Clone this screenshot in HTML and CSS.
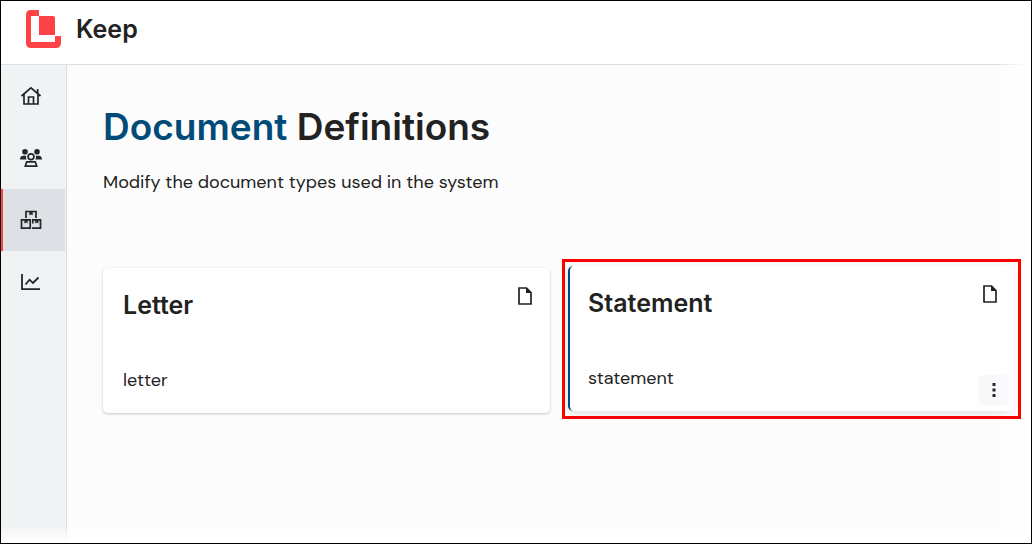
FILE: index.html
```html
<!DOCTYPE html>
<html lang="en">
<head>
<meta charset="utf-8">
<title>Keep</title>
<link rel="stylesheet" href="styles.css">
</head>
<body>
<div class="app">
  <header class="topbar">
    <svg class="logo" viewBox="0 0 36 38" aria-hidden="true">
      <path class="logo-mark" d="M5 0H13V26H35V33Q35 38 30 38H5Q0 38 0 33V5Q0 0 5 0Z"/>
      <path class="logo-gap" d="M5 6H13V26H29V32H5Z"/>
      <path class="logo-mark" d="M13 6H27Q29 6 29 8V25H13Z"/>
    </svg>
    <span class="brand">Keep</span>
  </header>
  <div class="body">
    <nav class="sidebar" aria-label="Main">
      <a class="nav-item" href="#" aria-label="Home">
        <svg class="icon" viewBox="0 0 22 22" fill="none" stroke="currentColor" stroke-width="1.7">
          <path d="M1.5 11L11 2.8L20.5 11M4 9.5V19H18V9.5M8.5 19V12H13.5V19M17.7 8V4"/>
        </svg>
      </a>
      <a class="nav-item" href="#" aria-label="Users">
        <svg class="icon" viewBox="0 0 22 22">
          <circle cx="5" cy="4.8" r="2.8" fill="currentColor"/>
          <circle cx="17" cy="4.8" r="2.8" fill="currentColor"/>
          <path d="M0 12.5Q0 8.7 3.4 8.7H6.2Q5.7 10.5 6.5 12.5ZM22 12.5Q22 8.7 18.6 8.7H15.8Q16.3 10.5 15.5 12.5Z" fill="currentColor"/>
          <circle cx="11" cy="9.8" r="2.9" fill="none" stroke="currentColor" stroke-width="1.7"/>
          <path d="M6.7 14.8H15.3L16.7 19.2H5.3Z" fill="none" stroke="currentColor" stroke-width="1.7"/>
        </svg>
      </a>
      <a class="nav-item nav-item-active" href="#" aria-label="Definitions" aria-current="page">
        <svg class="icon" viewBox="0 0 22 22" fill="none" stroke="currentColor" stroke-width="1.7">
          <path d="M6 9V2.5H16V9M1.5 10.8H10.2V19.2H1.5ZM12 19.2H20.5V10.8H12.8V14.5"/>
          <path d="M9.3 2.5H12.7V6.3L11 5.5L9.3 6.3ZM4.4 10.8H7.6V14.4L6 13.6L4.4 14.4ZM15.2 10.8H18.4V14.4L16.8 13.6L15.2 14.4Z" fill="currentColor" stroke="none"/>
        </svg>
      </a>
      <a class="nav-item" href="#" aria-label="Reports">
        <svg class="icon" viewBox="0 0 22 22" fill="none" stroke="currentColor" stroke-width="1.8">
          <path d="M2 3V18.2H20M5.5 13.5L9.5 8.7L13 12L18.5 6.5"/>
        </svg>
      </a>
    </nav>
    <main class="main">
      <h1 class="title"><span class="title-accent">Document</span> Definitions</h1>
      <p class="lead">Modify the document types used in the system</p>
      <section class="cards">
        <article class="card">
          <div class="card-head">
            <h2 class="card-title">Letter</h2>
            <svg class="file-icon" viewBox="0 0 14 18" aria-hidden="true">
              <path d="M1 1H8.5L13 5.5V17H1Z" fill="none" stroke="currentColor" stroke-width="1.7"/>
              <path d="M8 0.5V6H13.5Z" fill="currentColor"/>
            </svg>
          </div>
          <p class="card-text">letter</p>
        </article>
        <article class="card card-selected">
          <div class="card-head">
            <h2 class="card-title">Statement</h2>
            <svg class="file-icon" viewBox="0 0 14 18" aria-hidden="true">
              <path d="M1 1H8.5L13 5.5V17H1Z" fill="none" stroke="currentColor" stroke-width="1.7"/>
              <path d="M8 0.5V6H13.5Z" fill="currentColor"/>
            </svg>
          </div>
          <p class="card-text">statement</p>
          <button class="more" type="button" aria-label="More actions">
            <svg class="dots" viewBox="0 0 4 16" aria-hidden="true">
              <path d="M0.5 1h3v3h-3zM0.5 6.5h3v3h-3zM0.5 12h3v3h-3z" fill="currentColor"/>
            </svg>
          </button>
        </article>
      </section>
    </main>
  </div>
</div>
</body>
</html>
```
FILE: styles.css
```css
* {
  box-sizing: border-box;
}

body {
  margin: 0;
  font-family: "DM Sans", Inter, "Liberation Sans", sans-serif;
  color: #222222;
}

.app {
  position: relative;
  display: flex;
  flex-direction: column;
  min-height: 100vh;
  border: 1px solid #000000;
  background: #ffffff;
}

/* The page fades to white along its right and bottom edges. */
.app::before,
.app::after {
  content: "";
  position: absolute;
  right: 0;
  bottom: 0;
  z-index: 1;
  pointer-events: none;
}

.app::before {
  top: 0;
  width: 36px;
  background: linear-gradient(to right, transparent, #ffffff 90%);
}

.app::after {
  left: 0;
  height: 18px;
  background: linear-gradient(to bottom, transparent, #ffffff 90%);
}

.topbar {
  display: flex;
  align-items: center;
  gap: 14px;
  height: 64px;
  padding: 0 25px 8px;
  border-bottom: 1px solid #dcdfe6;
}

.logo {
  width: 36px;
  height: 38px;
}

.logo-mark {
  fill: #ff4245;
}

.logo-gap {
  fill: #ffffff;
}

.brand,
.title,
.card-title {
  font-family: Inter, "Liberation Sans", sans-serif;
  font-weight: 600;
}

.brand {
  font-size: 25px;
  line-height: 32px;
}

.body {
  display: flex;
  flex: 1;
}

.sidebar {
  width: 66px;
  padding-right: 1px;
  border-right: 1px solid #d9dde6;
  background: #f1f2f4;
}

.nav-item {
  display: flex;
  align-items: center;
  height: 62px;
  padding-left: 17px;
  border-left: 2px solid transparent;
  color: #222529;
}

.nav-item-active {
  border-left-color: #ff4245;
  background: #dde0e5;
}

.icon {
  width: 22px;
  height: 22px;
}

.main {
  flex: 1;
  padding: 36px 16px 36px 36px;
  background: #fcfcfc;
}

.title {
  margin: 0;
  font-size: 37px;
  line-height: 52px;
}

.title-accent {
  color: #004b78;
}

.lead {
  margin: 16px 0 0;
  font-size: 18px;
  line-height: 26px;
}

.cards {
  display: grid;
  grid-template-columns: 1fr 1fr;
  align-items: start;
  gap: 18px;
  margin-top: 73px;
}

.card {
  position: relative;
  padding: 19px 18px 20px 20px;
  border-radius: 5px;
  background: #ffffff;
  box-shadow: 0 1px 3px rgba(0, 0, 0, 0.22);
}

.card-selected {
  margin-top: -2px;
  padding-left: 18px;
  border-left: 2px solid #004b78;
  box-shadow: 0 2px 6px rgba(0, 0, 0, 0.12);
}

/* Callout frame round the selected card. */
.card-selected::after {
  content: "";
  position: absolute;
  inset: -7px -6px -8px -8px;
  z-index: 2;
  border: 3px solid #ff0000;
  pointer-events: none;
}

.card-head {
  display: flex;
  align-items: flex-start;
  justify-content: space-between;
}

.card-title {
  margin: 0;
  font-size: 25px;
  line-height: 36px;
}

.file-icon {
  width: 14px;
  height: 18px;
}

.card-text {
  margin: 44px 0 0;
  font-size: 18px;
  line-height: 26px;
}

.more {
  position: absolute;
  right: 6px;
  bottom: 6px;
  display: flex;
  align-items: center;
  justify-content: center;
  width: 30px;
  height: 30px;
  padding: 0;
  border: 0;
  border-radius: 3px;
  background: #f7f8fa;
  color: #222529;
}

.dots {
  width: 4px;
  height: 16px;
}
```
